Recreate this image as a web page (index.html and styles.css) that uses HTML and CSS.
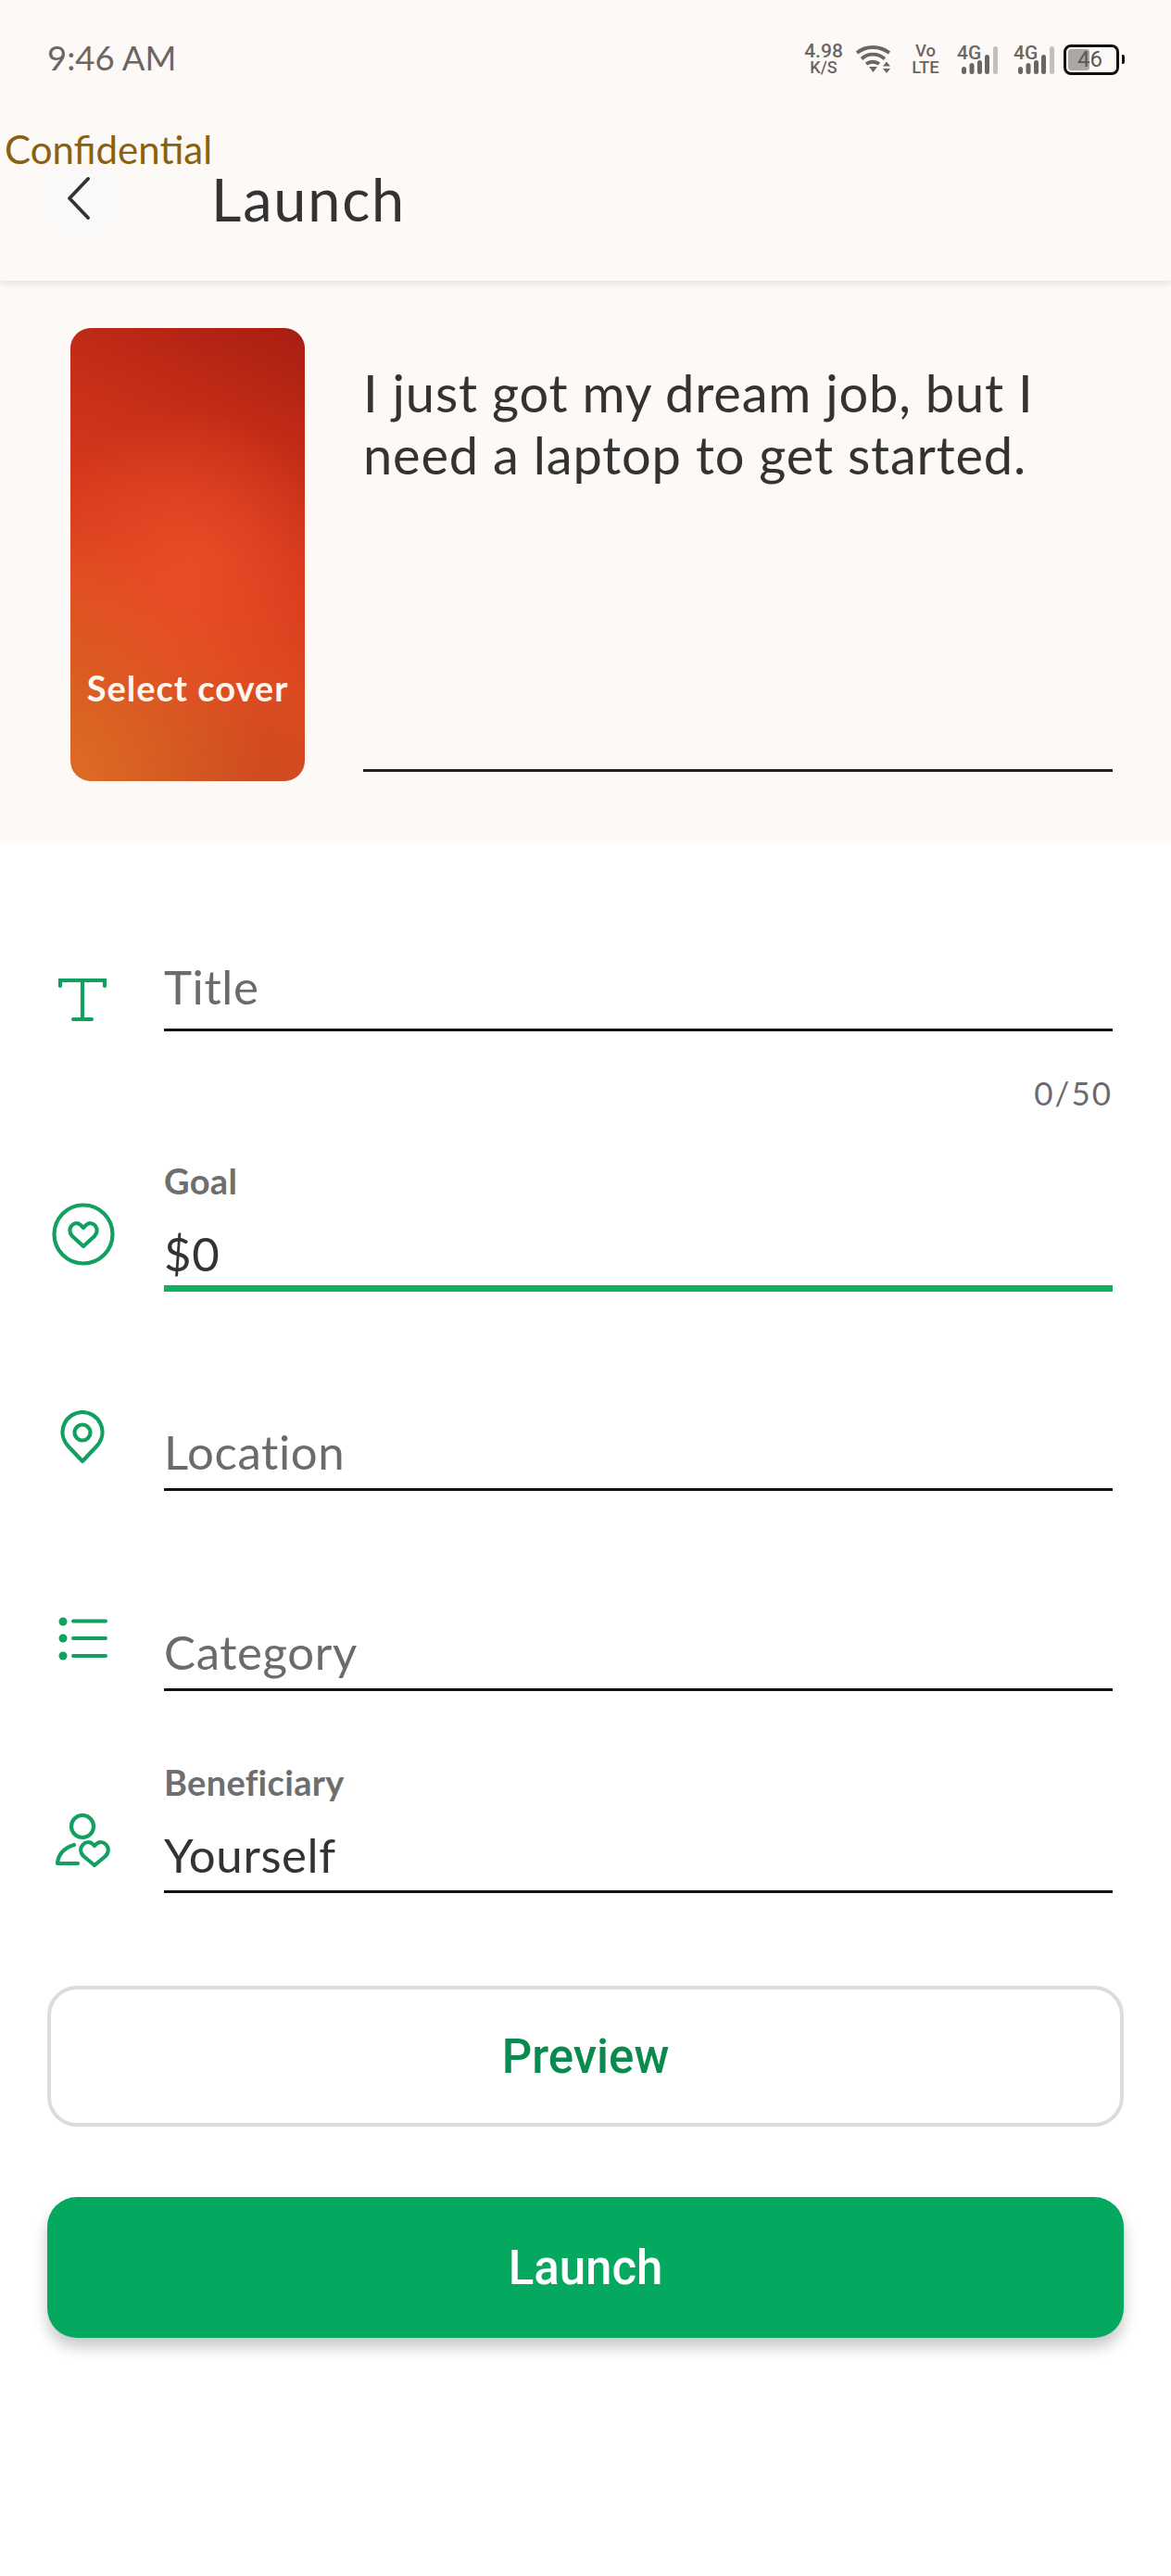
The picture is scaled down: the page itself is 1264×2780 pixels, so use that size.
FILE: index.html
```html
<!DOCTYPE html>
<html lang="en">
<head>
  <meta charset="UTF-8" />
  <meta name="viewport" content="width=device-width, initial-scale=1.0" />
  <title>Launch</title>
  <link rel="stylesheet" href="styles.css">
</head>
<body>

  <div class="app">
    <div class="top">
      <div class="status-bar">
        <span class="time">9:46 AM</span>
        <div class="status-icons">
          <div class="speed"><span class="speed-value">4.98</span><span>K/S</span></div>
          <svg class="wifi" width="40" height="32" viewBox="0 0 40 32" fill="none" stroke="#6b6663" stroke-width="3.800">
            <path d="M2 9 C12 1 26 1 37 9" />
            <path d="M7 15.500 C14 9 24 9 32 15.500" />
            <path d="M12 21 C16 18 22 18 26 21" />
            <path d="M15 24 h9 l-4.500 6 z" fill="#6b6663" stroke="none" />
            <path d="M30 23.500 h8 l-4 -5 z M30 26 h8 l-4 5 z" fill="#6b6663" stroke="none" />
          </svg>
          <div class="volte"><span>Vo</span><span>LTE</span></div>
          <svg class="signal" width="44" height="32" viewBox="0 0 44 32">
            <text x="0" y="16" class="signal-label">4G</text>
            <rect x="5" y="24" width="5" height="8" rx="2.500" fill="#6b6663" />
            <rect x="13.500" y="20" width="5" height="12" rx="2.500" fill="#6b6663" />
            <rect x="22" y="17" width="5" height="15" rx="2.500" fill="#6b6663" />
            <rect x="30" y="11" width="5" height="21" rx="2.500" fill="#6b6663" />
            <rect x="39" y="2" width="5" height="30" rx="2.500" fill="#c2bfbc" />
          </svg>
          <svg class="signal" width="44" height="32" viewBox="0 0 44 32">
            <text x="0" y="16" class="signal-label">4G</text>
            <rect x="5" y="24" width="5" height="8" rx="2.500" fill="#6b6663" />
            <rect x="13.500" y="20" width="5" height="12" rx="2.500" fill="#6b6663" />
            <rect x="22" y="17" width="5" height="15" rx="2.500" fill="#6b6663" />
            <rect x="30" y="11" width="5" height="21" rx="2.500" fill="#6b6663" />
            <rect x="39" y="2" width="5" height="30" rx="2.500" fill="#c2bfbc" />
          </svg>
          <div class="battery">
            <div class="battery-body">
              <div class="battery-fill"></div>
              <span class="battery-level">46</span>
            </div>
            <div class="battery-tip"></div>
          </div>
        </div>
      </div>

      <div class="title-bar">
        <div class="back-button">
          <svg width="26" height="46" viewBox="0 0 26 46" fill="none" stroke="#333333" stroke-width="3.800" stroke-linecap="round" stroke-linejoin="round">
            <path d="M23 2 L3 23 L23 44" />
          </svg>
        </div>
        <h1 class="page-title">Launch</h1>
      </div>

      <span class="confidential">Confidential</span>
    </div>

    <div class="story">
      <div class="cover">
        <span class="cover-label">Select cover</span>
      </div>
      <div class="story-text">I just got my dream job, but I need a laptop to get started.</div>
    </div>

    <form class="fields">
      <div class="field field-title">
        <svg class="field-icon" width="52" height="48" viewBox="0 0 52 48" fill="none" stroke="#12a061" stroke-width="4.200" stroke-linecap="round">
          <path d="M2 9 V3 H50 V9" />
          <path d="M26 3 V45" />
          <path d="M16 45 H36" />
        </svg>
        <div class="field-box">
          <span class="placeholder">Title</span>
        </div>
      </div>
      <div class="counter">0/50</div>

      <div class="field field-goal">
        <svg class="field-icon" width="68" height="68" viewBox="0 0 68 68" fill="none" stroke="#12a061" stroke-width="4.200" stroke-linejoin="round">
          <circle cx="34" cy="34" r="31.500" />
          <path d="M34 47 L22 36 C15 28 24 18 31 24 L34 27 L37 24 C44 18 53 28 46 36 Z" />
        </svg>
        <div class="field-box active">
          <label class="field-label">Goal</label>
          <span class="value">$0</span>
        </div>
      </div>

      <div class="field field-location">
        <svg class="field-icon" width="48" height="58" viewBox="0 0 48 58" fill="none" stroke="#12a061" stroke-width="4.200" stroke-linejoin="round">
          <path d="M24 55 L8 38 C-5 22 7 2 24 2 C41 2 53 22 40 38 Z" />
          <circle cx="24" cy="24" r="8.500" />
        </svg>
        <div class="field-box">
          <span class="placeholder">Location</span>
        </div>
      </div>

      <div class="field field-category">
        <svg class="field-icon" width="54" height="48" viewBox="0 0 54 48" fill="#12a061" stroke="none">
          <circle cx="5" cy="5" r="4.500" />
          <circle cx="5" cy="23" r="4.500" />
          <circle cx="5" cy="42" r="4.500" />
          <rect x="14" y="2.500" width="39" height="4" rx="2" />
          <rect x="14" y="21" width="39" height="4" rx="2" />
          <rect x="14" y="40" width="39" height="4" rx="2" />
        </svg>
        <div class="field-box">
          <span class="placeholder">Category</span>
        </div>
      </div>

      <div class="field field-beneficiary">
        <svg class="field-icon" width="60" height="58" viewBox="0 0 60 58" fill="none" stroke="#12a061" stroke-width="4.200" stroke-linecap="round" stroke-linejoin="round">
          <circle cx="29" cy="14" r="12" />
          <path d="M24 54 H2 C3 44 10 37 20 34" />
          <path d="M42 56 L30 46 C22 37 33 27 40 33 L42 35 L44 33 C51 27 62 37 54 46 Z" />
        </svg>
        <div class="field-box">
          <label class="field-label">Beneficiary</label>
          <span class="value">Yourself</span>
        </div>
      </div>
    </form>

    <div class="actions">
      <button class="btn btn-outline" type="button">Preview</button>
      <button class="btn btn-primary" type="button">Launch</button>
    </div>
  </div>

</body>
</html>
```

FILE: styles.css
```css
* {
  box-sizing: border-box;
}

body {
  margin: 0;
  background-color: #ffffff;
  font-family: 'Lato', sans-serif;
  color: #333333;
}

.app {
  width: 1264px;
  height: 2780px;
  overflow: hidden;
}

/* Status bar and title */
.top {
  position: relative;
  height: 303px;
  background-color: #fdf9f6;
  box-shadow: 0 3px 8px rgba(0, 0, 0, 0.1);
  z-index: 2;
}

.status-bar {
  height: 166px;
  padding: 44px 51px 0 51px;
  display: flex;
  justify-content: space-between;
  align-items: flex-start;
}

.time {
  font-size: 36.500px;
  line-height: 36px;
  color: #6b6663;
}

.status-icons {
  display: flex;
  align-items: center;
  margin-top: 2px;
  margin-right: -1px;
  color: #6b6663;
  font-family: 'Roboto', sans-serif;
  font-weight: 500;
}

.speed,
.volte {
  display: flex;
  flex-direction: column;
  align-items: center;
  line-height: 18px;
}

.speed {
  font-size: 18px;
  width: 44px;
  margin-right: 12px;
}

.speed-value {
  font-size: 21px;
}

.wifi {
  margin-right: 20px;
}

.volte {
  font-size: 18.500px;
  width: 32px;
  margin-right: 18px;
}

.signal {
  margin-right: 17px;
  overflow: visible;
}

.signal-label {
  font-size: 21px;
  font-weight: 500;
  fill: #6b6663;
}

.battery {
  display: flex;
  align-items: center;
  margin-left: -7px;
  gap: 3px;
}

.battery-body {
  position: relative;
  width: 60px;
  height: 33px;
  border: 3px solid #111111;
  border-radius: 8px;
}

.battery-fill {
  width: 23px;
  height: 23px;
  margin: 2px;
  background-color: #aaa7a5;
  border-radius: 3px;
}

.battery-level {
  position: absolute;
  top: 0;
  left: 12px;
  font-size: 24px;
  line-height: 27px;
  font-weight: 400;
  color: #5c5855;
}

.battery-tip {
  width: 3px;
  height: 10px;
  background-color: #111111;
  border-radius: 0 2px 2px 0;
}

.title-bar {
  display: flex;
  align-items: center;
  padding-left: 37px;
  height: 96px;
}

.back-button {
  width: 96px;
  height: 96px;
  border-radius: 50%;
  background-color: #fbf9f7;
  display: flex;
  align-items: center;
  justify-content: center;
}

.page-title {
  margin: 0 0 0 95px;
  font-size: 63px;
  font-weight: 400;
  letter-spacing: 1.800px;
  color: #333333;
}

.confidential {
  position: absolute;
  left: 5px;
  top: 136px;
  font-size: 42px;
  line-height: 50px;
  color: #8a6110;
}

/* Cover picker and story text */
.story {
  height: 606px;
  background-color: #fdf9f6;
  padding: 51px 63px 0 76px;
  display: flex;
  align-items: flex-start;
  gap: 63px;
}

.cover {
  width: 253px;
  height: 489px;
  flex-shrink: 0;
  border-radius: 22px;
  display: flex;
  align-items: flex-end;
  justify-content: center;
  padding-bottom: 78px;
  background:
    radial-gradient(ellipse 65% 36% at 50% 54%, rgba(234, 78, 40, 0.9), rgba(234, 78, 40, 0)),
    radial-gradient(ellipse 85% 55% at 0% 100%, rgba(224, 110, 36, 0.95), rgba(224, 110, 36, 0)),
    linear-gradient(205deg, #a81d12 0%, #c22c16 22%, #d63a1c 48%, #dc4a20 66%, #c44a20 100%);
}

.cover-label {
  font-size: 38px;
  font-weight: 700;
  letter-spacing: 1px;
  color: #fff7f0;
  white-space: nowrap;
}

.story-text {
  flex: 1;
  height: 479px;
  border-bottom: 3px solid #222222;
  padding-top: 36px;
  font-size: 56px;
  line-height: 67px;
  letter-spacing: 0.800px;
  color: #333333;
}

/* Form rows */
.fields {
  padding: 0 63px 0 52px;
}

.field {
  display: flex;
  align-items: flex-end;
}

.field-icon {
  flex-shrink: 0;
}

.field-box {
  margin-left: auto;
  width: 1024px;
  border-bottom: 3px solid #111111;
  display: flex;
  flex-direction: column;
}

.field-box.active {
  border-bottom: 7px solid #12b161;
}

.placeholder,
.value {
  font-size: 51px;
  line-height: 60px;
  letter-spacing: 0.600px;
  color: #6b6b6b;
}

.value {
  color: #333333;
}

.field-label {
  font-size: 38px;
  line-height: 40px;
  font-weight: 700;
  letter-spacing: 0.300px;
  color: #6e6e6e;
  margin-bottom: 29px;
}

.field-title {
  padding-top: 126px;
}

.field-title .field-box {
  padding-bottom: 15px;
}

.field-title .field-icon {
  margin: 0 0 10px 11px;
}

.counter {
  margin-top: 46px;
  margin-bottom: 1px;
  text-align: right;
  font-size: 35px;
  line-height: 40px;
  letter-spacing: 2px;
  color: #6b6b6b;
}

.field-goal {
  margin-top: 55px;
}

.field-goal .field-box {
  padding-bottom: 4px;
}

.field-goal .field-icon {
  margin: 0 0 28px 4px;
}

.field-location {
  margin-top: 128px;
}

.field-location .field-box {
  padding-bottom: 9px;
}

.field-location .field-icon {
  margin: 0 0 29px 13px;
}

.field-category {
  margin-top: 136px;
}

.field-category .field-box {
  padding-bottom: 9px;
}

.field-category .field-icon {
  margin: 0 0 32px 11px;
}

.field-beneficiary {
  margin-top: 78px;
}

.field-beneficiary .field-box {
  padding-bottom: 8px;
}

.field-beneficiary .field-icon {
  margin: 0 0 28px 8px;
}

/* Buttons */
.actions {
  padding: 100px 51px 0 51px;
  display: flex;
  flex-direction: column;
  gap: 76px;
}

.btn {
  height: 152px;
  border-radius: 32px;
  font-family: 'Roboto', sans-serif;
  font-size: 51px;
  font-weight: 500;
  cursor: pointer;
}

.btn-outline {
  background-color: #ffffff;
  border: 4px solid #dcdcdc;
  color: #0a8a4e;
}

.btn-primary {
  background-color: #04a85e;
  border: none;
  color: #ffffff;
  box-shadow: 0 10px 16px rgba(0, 0, 0, 0.22);
}
```
